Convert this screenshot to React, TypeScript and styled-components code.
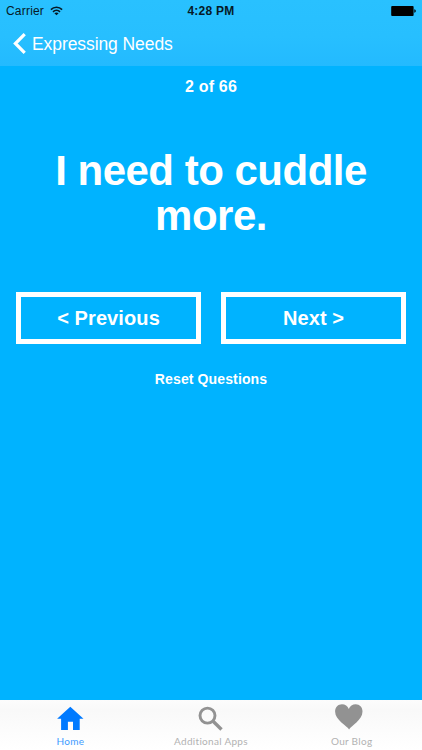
import React from "react";
import styled, { createGlobalStyle } from "styled-components";

const GlobalStyle = createGlobalStyle`
  * { box-sizing: border-box; }
  body { margin: 0; background: #00b3ff; }
  button { appearance: none; border: 0; background: none; padding: 0; margin: 0; font: inherit; color: inherit; }
  svg { display: block; flex: none; }
`;

const Screen = styled.div`
  width: 100%;
  height: 100vh;
  min-height: 750px;
  display: flex;
  flex-direction: column;
  background: #00b3ff;
  color: #fff;
  font-family: "Liberation Sans", Arial, sans-serif;
`;

const TopBar = styled.header`
  height: 66px;
  background: linear-gradient(#29c1ff 0%, #27bfff 55%, #23baff 100%);
`;

const StatusBar = styled.div`
  height: 22px;
  padding: 0 6px 0 6px;
  display: grid;
  grid-template-columns: 1fr auto 1fr;
  align-items: center;
  color: #061a26;
`;

const Carrier = styled.div`
  display: flex;
  align-items: center;
  gap: 6px;
  font-size: 12px;
  letter-spacing: 0.2px;
`;

const Clock = styled.div`
  font-size: 12px;
  font-weight: 700;
  letter-spacing: 0.25px;
`;

const Battery = styled.div`
  display: flex;
  justify-content: flex-end;
`;

const BackButton = styled.button`
  height: 43px;
  padding-left: 13px;
  display: flex;
  align-items: center;
  gap: 6px;
`;

const BackLabel = styled.span`
  font-size: 17.5px;
  line-height: 22px;
  letter-spacing: -0.08px;
`;

const Content = styled.main`
  flex: 1;
  display: flex;
  flex-direction: column;
  align-items: center;
`;

const Counter = styled.div`
  margin-top: 11px;
  font-size: 16px;
  line-height: 20px;
  font-weight: 700;
  letter-spacing: 0.2px;
`;

const Question = styled.h1`
  margin: 51px 0 0;
  width: 340px;
  font-size: 42px;
  line-height: 45px;
  font-weight: 700;
  text-align: center;
  letter-spacing: -0.5px;
`;

const ButtonRow = styled.div`
  align-self: stretch;
  margin: 54px 16px 0;
  display: grid;
  grid-template-columns: 1fr 1fr;
  gap: 20px;
`;

const OutlineButton = styled.button`
  height: 52px;
  border: 5px solid #fff;
  font-size: 20px;
  line-height: 24px;
  font-weight: 700;
  letter-spacing: 0.1px;
`;

const ResetButton = styled.button`
  margin-top: 25px;
  font-size: 14px;
  line-height: 20px;
  font-weight: 700;
  letter-spacing: 0.12px;
`;

const TabBar = styled.nav`
  height: 50px;
  display: grid;
  grid-template-columns: 1fr 1fr 1fr;
  background: linear-gradient(#fcfcfc, #f9f9f9 20%, #fff);
`;

const Tab = styled.button<{ $active?: boolean }>`
  display: flex;
  flex-direction: column;
  align-items: center;
  color: ${(p) => (p.$active ? "#007aff" : "#929292")};
`;

const TabIcon = styled.span`
  height: 35px;
`;

const TabLabel = styled.span<{ $active?: boolean }>`
  font-family: Lato, sans-serif;
  font-size: 10px;
  line-height: 13px;
  letter-spacing: 0.3px;
  color: ${(p) => (p.$active ? "#3d9bff" : "#b2b2b2")};
`;

const WifiIcon = () => (
  <svg width="13" height="10" viewBox="0 0 13 10" fill="none" stroke="#061a26" strokeWidth="1.6">
    <path d="M0.9 3.6C4 .5 9 .5 12.1 3.6" />
    <path d="M3 5.8C5 3.9 8 3.9 10 5.8" />
    <path d="M6.5 9.2L4.4 7.2C5.6 6.2 7.4 6.2 8.6 7.2Z" fill="#061a26" stroke="none" />
  </svg>
);

const BatteryIcon = () => (
  <svg width="25" height="10" viewBox="0 0 25 10" fill="#000">
    <rect x="0.2" y="0" width="22.4" height="10" rx="1" />
    <path d="M23.3 3.3C24.3 3.6 24.8 4.2 24.8 5S24.3 6.4 23.3 6.7Z" />
  </svg>
);

const ChevronIcon = () => (
  <svg width="13" height="21" viewBox="0 0 13 21" fill="none" stroke="#fff" strokeWidth="3.2">
    <path d="M11.7 1.2L2.4 10.5L11.7 19.8" />
  </svg>
);

const HomeIcon = () => (
  <svg width="28" height="35" viewBox="0 0 28 35" fill="currentColor">
    <path d="M14.3 6.8L27.5 18.7H23.7V30H17V21.7H11.9V30H5.1V18.7H1.1Z" />
  </svg>
);

const SearchIcon = () => (
  <svg width="28" height="35" viewBox="0 0 28 35" fill="none" stroke="currentColor">
    <circle cx="10.5" cy="15.6" r="7.5" strokeWidth="2.9" />
    <path d="M16.1 21.3L24.5 29.5" strokeWidth="3.4" />
  </svg>
);

const HeartIcon = () => (
  <svg width="28" height="35" viewBox="0 0 28 35" fill="currentColor">
    <path d="M14.1 29.6C12.3 26.2 .1 20.3.1 11.6C.1 7 3.2 4.3 7 4.3C10.1 4.3 12.7 6.2 13.8 9C14.9 6.2 17.6 4.3 20.7 4.3C24.6 4.3 27.5 7.2 27.5 11.6C27.5 20.3 15.8 26.2 14.1 29.6Z" />
  </svg>
);

const HeartTabIcon = styled(TabIcon)`
  margin-right: 6px;
`;

export default function App() {
  return (
    <Screen>
      <GlobalStyle />
      <TopBar>
        <StatusBar>
          <Carrier>
            Carrier
            <WifiIcon />
          </Carrier>
          <Clock>4:28 PM</Clock>
          <Battery>
            <BatteryIcon />
          </Battery>
        </StatusBar>
        <BackButton>
          <ChevronIcon />
          <BackLabel>Expressing Needs</BackLabel>
        </BackButton>
      </TopBar>
      <Content>
        <Counter>2 of 66</Counter>
        <Question>I need to cuddle more.</Question>
        <ButtonRow>
          <OutlineButton>&lt; Previous</OutlineButton>
          <OutlineButton>Next &gt;</OutlineButton>
        </ButtonRow>
        <ResetButton>Reset Questions</ResetButton>
      </Content>
      <TabBar>
        <Tab $active>
          <TabIcon>
            <HomeIcon />
          </TabIcon>
          <TabLabel $active>Home</TabLabel>
        </Tab>
        <Tab>
          <TabIcon>
            <SearchIcon />
          </TabIcon>
          <TabLabel>Additional Apps</TabLabel>
        </Tab>
        <Tab>
          <HeartTabIcon>
            <HeartIcon />
          </HeartTabIcon>
          <TabLabel>Our Blog</TabLabel>
        </Tab>
      </TabBar>
    </Screen>
  );
}
